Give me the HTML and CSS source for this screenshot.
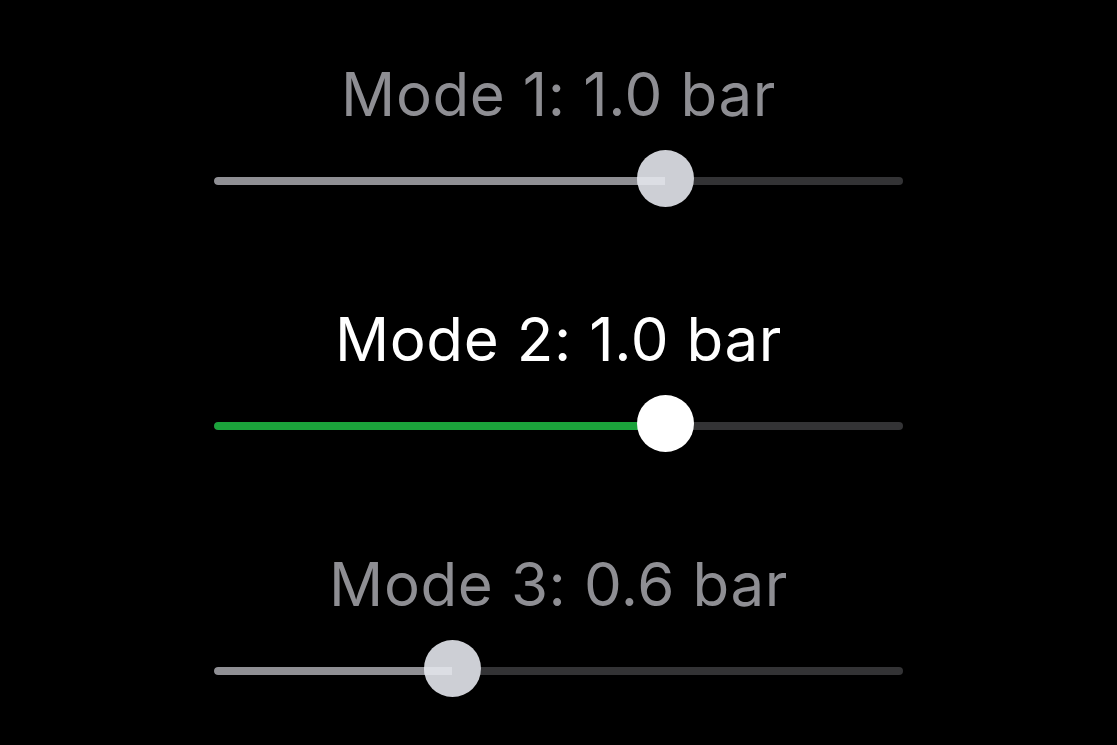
FILE: index.html
```html
<!DOCTYPE html>
<html lang="en">
<head>
	<meta charset="UTF-8">
	<title>Modes</title>
	<link rel="stylesheet" href="styles.css">
</head>
<body>
	<div class="modes">
		<div class="mode off">
			<div class="label">Mode 1: 1.0 bar</div>
			<div class="slider">
				<div class="track"><div class="fill" style="width: 65.4%"></div></div>
				<div class="thumb" style="left: 65.4%"></div>
			</div>
		</div>
		<div class="mode on">
			<div class="label">Mode 2: 1.0 bar</div>
			<div class="slider">
				<div class="track"><div class="fill" style="width: 65.4%"></div></div>
				<div class="thumb" style="left: 65.4%"></div>
			</div>
		</div>
		<div class="mode off">
			<div class="label">Mode 3: 0.6 bar</div>
			<div class="slider">
				<div class="track"><div class="fill" style="width: 34.6%"></div></div>
				<div class="thumb" style="left: 34.6%"></div>
			</div>
		</div>
	</div>
</body>
</html>
```

FILE: styles.css
```css
*{
	margin: 0;
	padding: 0;
	box-sizing: border-box;
}
body{
	width: 1117px;
	height: 745px;
	background: #000;
	overflow: hidden;
	font-family: Inter, "Noto Sans", sans-serif;
}
.modes{
	display: flex;
	flex-direction: column;
	align-items: center;
	padding-top: 65px;
	gap: 103px;
}
.mode{
	display: flex;
	flex-direction: column;
	align-items: center;
	gap: 27px;
}
.label{
	font-size: 60px;
	line-height: 58px;
	height: 58px;
	letter-spacing: 0.6px;
	font-feature-settings: "calt" 0;
	color: #8e8e93;
	white-space: nowrap;
}
.on .label{
	color: #fff;
}
.slider{
	position: relative;
	width: 689px;
	height: 57px;
	display: flex;
	align-items: center;
}
.track{
	width: 100%;
	height: 8px;
	margin-top: 4px;
	border-radius: 4px;
	background: #333335;
	overflow: hidden;
}
.fill{
	height: 100%;
	border-radius: 4px;
	background: #8f8f94;
}
.on .fill{
	background: #1ba33b;
}
.thumb{
	position: absolute;
	top: 0;
	width: 57px;
	height: 57px;
	margin-left: -28px;
	border-radius: 50%;
	background: #cdcfd5;
	overflow: hidden;
}
.off .thumb::after{
	content: "";
	position: absolute;
	left: 0;
	top: 27px;
	width: 28px;
	height: 8px;
	background: #dcdee4;
}
.on .thumb{
	background: #fff;
}
```
